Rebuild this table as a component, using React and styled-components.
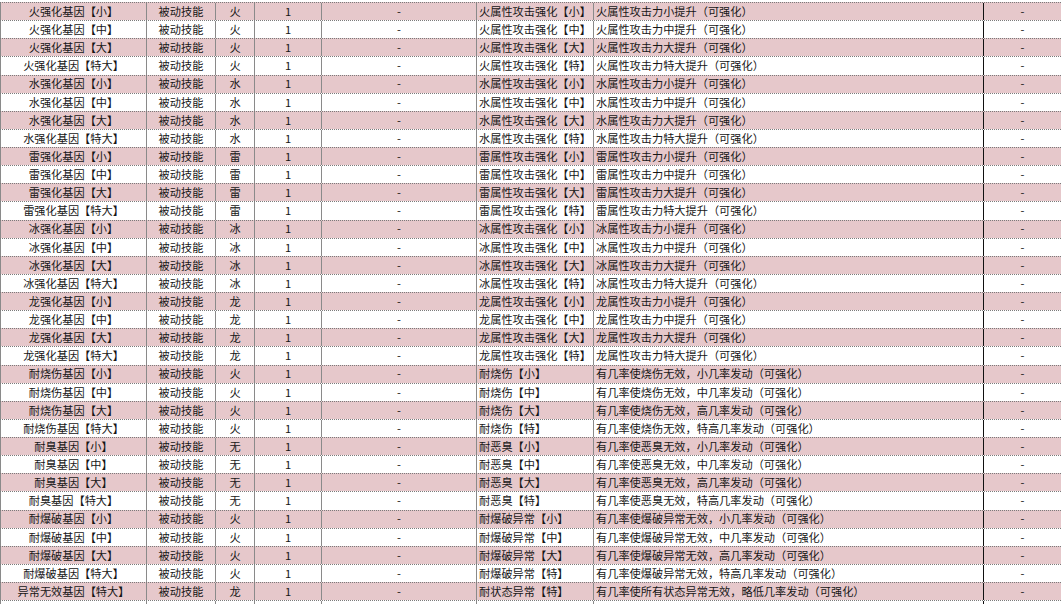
import React from 'react'
import styled, { createGlobalStyle } from 'styled-components'

// Global ---------------------------------------------------------
const GlobalStyle = createGlobalStyle`
  html, body {
    margin: 0;
    padding: 0;
    background: #ffffff;
  }
  body {
    font-family: "Noto Sans CJK SC", "Liberation Sans", sans-serif;
    color: #161616;
    overflow: hidden;
  }
`

// Styled-components -----------------------------------------------
const Sheet = styled.div`
  width: 1061px;
  height: 604px;
  padding-top: 2px;
  box-sizing: border-box;
  overflow: hidden;
`
const Row = styled.div`
  display: grid;
  grid-template-columns: 146px 69px 39px 67px 155px 117px 390px 78px;
  height: 18.13px;
  box-sizing: border-box;
  border-top: 1px dotted #7a7a7a;
  background: ${(p) => (p.$pink ? '#e6c8cb' : '#ffffff')};
`
const Cell = styled.div`
  display: flex;
  align-items: center;
  justify-content: ${(p) => (p.$left ? 'flex-start' : 'center')};
  padding-left: ${(p) => (p.$left ? '2px' : '0')};
  border-left: 1px solid ${(p) => (p.$dark ? '#111111' : '#8a8a8a')};
  font-size: 11.2px;
  line-height: 1;
  white-space: nowrap;
  overflow: hidden;
  box-sizing: border-box;
`

// Data -----------------------------------------------------------
const sizes = ['小', '中', '大', '特大']
const shortSizes = ['小', '中', '大', '特']
const rateText = ['小几率', '中几率', '高几率', '特高几率']

const rows = []
;['火', '水', '雷', '冰', '龙'].forEach((el) => {
  sizes.forEach((s, i) => {
    rows.push([
      `${el}强化基因【${s}】`,
      el,
      `${el}属性攻击强化【${shortSizes[i]}】`,
      `${el}属性攻击力${s}提升（可强化）`,
    ])
  })
})
const resist = [
  ['耐烧伤基因', '火', '耐烧伤', '烧伤'],
  ['耐臭基因', '无', '耐恶臭', '恶臭'],
  ['耐爆破基因', '火', '耐爆破异常', '爆破异常'],
]
resist.forEach(([name, el, skill, effect]) => {
  sizes.forEach((s, i) => {
    rows.push([
      `${name}【${s}】`,
      el,
      `${skill}【${shortSizes[i]}】`,
      `有几率使${effect}无效，${rateText[i]}发动（可强化）`,
    ])
  })
})
rows.push([
  '异常无效基因【特大】',
  '龙',
  '耐状态异常【特】',
  '有几率使所有状态异常无效，略低几率发动（可强化）',
])

// Composant App ---------------------------------------------------
export default function App() {
  return (
    <>
      <GlobalStyle />
      <Sheet>
        {rows.map((r, i) => (
          <Row key={i} $pink={i % 2 === 0}>
            <Cell>{r[0]}</Cell>
            <Cell>被动技能</Cell>
            <Cell>{r[1]}</Cell>
            <Cell>1</Cell>
            <Cell>-</Cell>
            <Cell $left>{r[2]}</Cell>
            <Cell $left>{r[3]}</Cell>
            <Cell $dark>-</Cell>
          </Row>
        ))}
        <Row>
          <Cell />
          <Cell />
          <Cell />
          <Cell />
          <Cell />
          <Cell />
          <Cell />
          <Cell $dark />
        </Row>
      </Sheet>
    </>
  )
}
